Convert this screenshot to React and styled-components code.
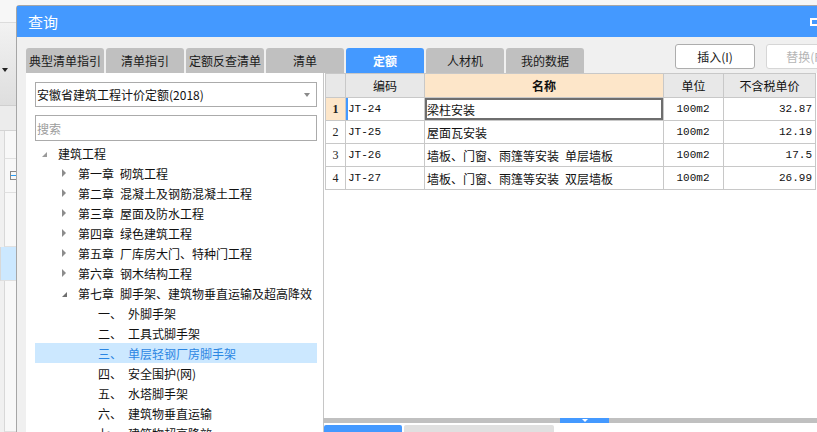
import styled, { createGlobalStyle } from "styled-components";

const GlobalStyle = createGlobalStyle`
  html, body { margin: 0; padding: 0; }
  body {
    width: 817px;
    height: 432px;
    overflow: hidden;
    font-family: "Noto Sans CJK SC", "Noto Sans", sans-serif;
    font-size: 12px;
    color: #111;
  }
`;

const BLUE = "#4499ff";

const tabList = ["典型清单指引", "清单指引", "定额反查清单", "清单", "定额", "人材机", "我的数据"];

const tree = [
  { level: 0, arrow: "open", text: "建筑工程" },
  { level: 1, arrow: "closed", label: "第一章", text: "砌筑工程" },
  { level: 1, arrow: "closed", label: "第二章", text: "混凝土及钢筋混凝土工程" },
  { level: 1, arrow: "closed", label: "第三章", text: "屋面及防水工程" },
  { level: 1, arrow: "closed", label: "第四章", text: "绿色建筑工程" },
  { level: 1, arrow: "closed", label: "第五章", text: "厂库房大门、特种门工程" },
  { level: 1, arrow: "closed", label: "第六章", text: "钢木结构工程" },
  { level: 1, arrow: "open", label: "第七章", text: "脚手架、建筑物垂直运输及超高降效" },
  { level: 2, label: "一、", text: "外脚手架" },
  { level: 2, label: "二、", text: "工具式脚手架" },
  { level: 2, label: "三、", text: "单层轻钢厂房脚手架", selected: true },
  { level: 2, label: "四、", text: "安全围护(网)" },
  { level: 2, label: "五、", text: "水塔脚手架" },
  { level: 2, label: "六、", text: "建筑物垂直运输" },
  { level: 2, label: "七、", text: "建筑物超高降效" },
];

// \u2002 = half-width gap like the original bitmap font
const rows = [
  { no: 1, code: "JT-24", name: "梁柱安装", unit: "100m2", price: "32.87" },
  { no: 2, code: "JT-25", name: "屋面瓦安装", unit: "100m2", price: "12.19" },
  { no: 3, code: "JT-26", name: "墙板、门窗、雨篷等安装\u2002单层墙板", unit: "100m2", price: "17.5" },
  { no: 4, code: "JT-27", name: "墙板、门窗、雨篷等安装\u2002双层墙板", unit: "100m2", price: "26.99" },
];

const App = () => {
  return (
    <>
      <GlobalStyle />
      <Desktop>
        <Backdrop>
          <BackTop />
          <BackToolbar>
            <DropGlyph />
          </BackToolbar>
          <BackBand />
          <BackList>
            <BackRow $h={27} />
            <BackRow $h={33}>
              <BackIcon />
            </BackRow>
            <BackRow $h={53} />
            <BackRow $h={33} $active />
            <BackRow $h={150} />
          </BackList>
        </Backdrop>

        <Dialog>
          <TitleBar>
            <Title>查询</Title>
            <MaxIcon />
          </TitleBar>

          <TopRow>
            <Tabs>
              {tabList.map((t) => (
                <Tab key={t} $active={t === "定额"}>
                  {t}
                </Tab>
              ))}
            </Tabs>
            <Actions>
              <ActionButton>插入(I)</ActionButton>
              <ActionButton disabled>替换(R)</ActionButton>
            </Actions>
          </TopRow>

          <Content>
            <LeftPanel>
              <Combo>
                安徽省建筑工程计价定额(2018)
                <ComboArrow />
              </Combo>
              <Search placeholder="搜索" />
              <Tree>
                {tree.map((n, i) => (
                  <TreeRow key={i} $level={n.level} $selected={n.selected}>
                    <ArrowSlot>{n.arrow && <Arrow $open={n.arrow === "open"} $root={n.level === 0} />}</ArrowSlot>
                    {n.label && <NodeLabel $level={n.level}>{n.label}</NodeLabel>}
                    {n.text}
                  </TreeRow>
                ))}
              </Tree>
            </LeftPanel>

            <RightPanel>
              <GridArea>
                <Grid>
                  <HeadCell />
                  <HeadCell>编码</HeadCell>
                  <HeadCell $accent>名称</HeadCell>
                  <HeadCell>单位</HeadCell>
                  <HeadCell>不含税单价</HeadCell>
                  {rows.map((r, i) => (
                    <Row key={r.no}>
                      <NoCell $current={i === 0}>{r.no}</NoCell>
                      <Cell $mono $current={i === 0}>{r.code}</Cell>
                      <Cell $focus={i === 0}>{r.name}</Cell>
                      <Cell $mono $align="center">{r.unit}</Cell>
                      <Cell $mono $align="right">{r.price}</Cell>
                    </Row>
                  ))}
                </Grid>
              </GridArea>
              <Splitter>
                <SplitHandle />
              </Splitter>
              <BottomTabs>
                <BottomTab $active />
                <BottomTab />
              </BottomTabs>
            </RightPanel>
          </Content>
        </Dialog>
      </Desktop>
    </>
  );
};

const Desktop = styled.div`
  position: relative;
  width: 817px;
  height: 432px;
  overflow: hidden;
  background: #f6f6f6;
`;

/* app behind the dialog */
const Backdrop = styled.div`
  display: flex;
  flex-direction: column;
  width: 16px;
  height: 100%;
  background: #f4f4f4;
`;
const BackTop = styled.div`
  height: 23px;
  background: #f7f7f7;
  border-bottom: 1px solid #dcdcdc;
`;
const BackToolbar = styled.div`
  height: 86px;
  background: linear-gradient(#f2f2f2, #dedede);
  border-bottom: 1px solid #cfcfcf;
  display: flex;
  align-items: flex-end;
  padding: 0 0 33px 2px;
  box-sizing: border-box;
`;
const DropGlyph = styled.div`
  width: 0;
  height: 0;
  border-top: 4px solid #222;
  border-left: 3px solid transparent;
  border-right: 3px solid transparent;
`;
const BackBand = styled.div`
  height: 26px;
  background: #ececec;
  border-bottom: 1px solid #d4d4d4;
`;
const BackList = styled.div`
  flex: 1;
  display: flex;
  flex-direction: column;
  border-left: 4px solid #f0f0f0;
  background: #f8f8f8;
`;
const BackRow = styled.div`
  height: ${({ $h }) => $h}px;
  border-bottom: 1px solid #e0e0e0;
  border-left: 1px solid #d8d8d8;
  margin-left: ${({ $active }) => ($active ? "-4px" : "0")};
  background: ${({ $active }) => ($active ? "#cce8ff" : "transparent")};
  display: flex;
  align-items: center;
  justify-content: flex-end;
`;
const BackIcon = styled.div`
  width: 5px;
  height: 7px;
  border: 1px solid #888;
  border-right: none;
  background: linear-gradient(transparent 3px, #2a9df4 3px, #2a9df4 4px, transparent 4px);
`;

/* dialog window */
const Dialog = styled.div`
  position: absolute;
  left: 16px;
  top: 5px;
  width: 840px;
  height: 470px;
  box-sizing: border-box;
  border: 1px solid #a6a6a6;
  border-radius: 3px 3px 0 0;
  background: #f0f0f0;
  display: flex;
  flex-direction: column;
`;
const TitleBar = styled.div`
  height: 31px;
  flex: none;
  background: ${BLUE};
  display: flex;
  align-items: center;
  padding: 0 34px 0 11px;
`;
const Title = styled.div`
  color: #fff;
  font-size: 15px;
  line-height: 20px;
  margin-top: 1px;
`;
const MaxIcon = styled.div`
  margin-left: auto;
  width: 7px;
  height: 4px;
  border: 2px solid #fff;
  margin-top: 1px;
`;

const TopRow = styled.div`
  height: 36px;
  flex: none;
  display: flex;
  padding: 0 9px;
`;
const Tabs = styled.div`
  display: flex;
  gap: 2px;
  align-self: flex-end;
`;
const Tab = styled.div`
  width: 78px;
  height: 25px;
  border-radius: 3px 3px 0 0;
  background: ${({ $active }) => ($active ? BLUE : "#c0c0c0")};
  color: ${({ $active }) => ($active ? "#fff" : "#1a1a1a")};
  font-weight: ${({ $active }) => ($active ? 700 : 400)};
  display: flex;
  align-items: center;
  justify-content: center;
  font-size: 12px;
`;
const Actions = styled.div`
  margin-left: auto;
  margin-top: 7px;
  display: flex;
  gap: 11px;
  align-self: flex-start;
`;
const ActionButton = styled.button`
  width: 80px;
  height: 25px;
  box-sizing: border-box;
  border-radius: 3px;
  border: 1px solid ${({ disabled }) => (disabled ? "#d6d6d6" : "#adadad")};
  background: #fff;
  color: ${({ disabled }) => (disabled ? "#b5b5b5" : "#1a1a1a")};
  font-family: inherit;
  font-size: 12px;
  padding: 0;
`;

const Content = styled.div`
  flex: 1;
  display: flex;
  padding-left: 9px;
  min-height: 0;
`;

/* left: tree */
const LeftPanel = styled.div`
  width: 297px;
  flex: none;
  background: #fff;
  padding: 9px 6px 0 9px;
  box-sizing: border-box;
  display: flex;
  flex-direction: column;
`;
const Combo = styled.div`
  height: 25px;
  box-sizing: border-box;
  border: 1px solid #ababab;
  display: flex;
  align-items: center;
  padding-left: 1px;
  font-size: 12px;
  color: #111;
`;
const ComboArrow = styled.div`
  margin-left: auto;
  margin-right: 6px;
  width: 0;
  height: 0;
  border-top: 4px solid #8a8a8a;
  border-left: 3px solid transparent;
  border-right: 3px solid transparent;
`;
const Search = styled.input`
  margin-top: 8px;
  height: 26px;
  box-sizing: border-box;
  border: 1px solid #ababab;
  padding: 0 1px;
  font-family: inherit;
  font-size: 12px;
  outline: none;
  &::placeholder {
    color: #9c9c9c;
  }
`;
const Tree = styled.div`
  margin-top: 2px;
  display: flex;
  flex-direction: column;
`;
const TreeRow = styled.div`
  height: 20px;
  display: flex;
  align-items: center;
  white-space: nowrap;
  padding-left: ${({ $level }) => 3 + $level * 20}px;
  background: ${({ $selected }) => ($selected ? "#cce8ff" : "transparent")};
  color: ${({ $selected }) => ($selected ? "#2b86e3" : "#111")};
  font-size: 12px;
`;
const ArrowSlot = styled.div`
  width: 20px;
  flex: none;
  display: flex;
  align-items: center;
  padding-left: 4px;
  box-sizing: border-box;
`;
const Arrow = styled.div`
  width: 0;
  height: 0;
  ${({ $open, $root }) =>
    $open
      ? `border-bottom: 5px solid ${$root ? "#9a9a9a" : "#6f6f6f"};
         border-left: 5px solid transparent;
         margin-top: 2px;`
      : `border-left: 4px solid #8c8c8c;
         border-top: 4px solid transparent;
         border-bottom: 4px solid transparent;`}
`;
const NodeLabel = styled.span`
  display: inline-block;
  width: ${({ $level }) => ($level === 2 ? 30 : 42)}px;
  flex: none;
`;

/* right: grid */
const RightPanel = styled.div`
  flex: 1;
  background: #fff;
  border-left: 1px solid #c6c6c6;
  display: flex;
  flex-direction: column;
`;
const GridArea = styled.div`
  height: 345px;
  flex: none;
  padding-left: 1px;
`;
const Grid = styled.div`
  display: grid;
  grid-template-columns: 20px 79px 239px 60px 92px;
  grid-auto-rows: 23px;
  grid-template-rows: 24px;
  width: max-content;
  border-top: 1px solid #c8c8c8;
  border-left: 1px solid #c8c8c8;
`;
const HeadCell = styled.div`
  box-sizing: border-box;
  border-right: 1px solid #c8c8c8;
  border-bottom: 1px solid #c8c8c8;
  background: ${({ $accent }) => ($accent ? "#fde6c9" : "#e8e8e8")};
  font-weight: ${({ $accent }) => ($accent ? 700 : 400)};
  display: flex;
  align-items: center;
  justify-content: center;
  font-size: 12px;
`;
const Row = styled.div`
  display: contents;
`;
const Cell = styled.div`
  box-sizing: border-box;
  border-right: 1px solid #c8c8c8;
  border-bottom: 1px solid #c8c8c8;
  display: flex;
  align-items: center;
  justify-content: ${({ $align }) =>
    $align === "right" ? "flex-end" : $align === "center" ? "center" : "flex-start"};
  padding: 0 3px 0 2px;
  white-space: nowrap;
  font-family: ${({ $mono }) =>
    $mono ? `"Liberation Mono", "Noto Sans CJK SC", monospace` : `"Noto Sans CJK SC", sans-serif`};
  font-size: ${({ $mono }) => ($mono ? "11px" : "12px")};
  box-shadow: ${({ $current, $focus }) =>
    $focus ? "inset 0 0 0 2px #6e6e6e" : $current ? `inset 2px 0 0 ${BLUE}` : "none"};
`;
const NoCell = styled.div`
  box-sizing: border-box;
  border-right: 1px solid #c8c8c8;
  border-bottom: 1px solid #c8c8c8;
  background: ${({ $current }) => ($current ? "#fde6c9" : "#fff")};
  font-weight: ${({ $current }) => ($current ? 700 : 400)};
  font-family: "Liberation Serif", serif;
  font-size: 12px;
  color: #222;
  display: flex;
  align-items: center;
  justify-content: center;
`;

const Splitter = styled.div`
  height: 5px;
  flex: none;
  background: #c0c0c0;
  margin-left: -1px;
  padding-left: 237px;
  display: flex;
`;
const SplitHandle = styled.div`
  width: 49px;
  background: ${BLUE};
  display: flex;
  justify-content: center;
  align-items: center;
  &::after {
    content: "";
    width: 0;
    height: 0;
    border-top: 3px solid #fff;
    border-left: 3px solid transparent;
    border-right: 3px solid transparent;
  }
`;
const BottomTabs = styled.div`
  margin-top: 2px;
  display: flex;
  gap: 2px;
`;
const BottomTab = styled.div`
  width: ${({ $active }) => ($active ? 78 : 150)}px;
  height: 22px;
  border-radius: 2px 2px 0 0;
  background: ${({ $active }) => ($active ? BLUE : "#e0e0e0")};
`;

export default App;
